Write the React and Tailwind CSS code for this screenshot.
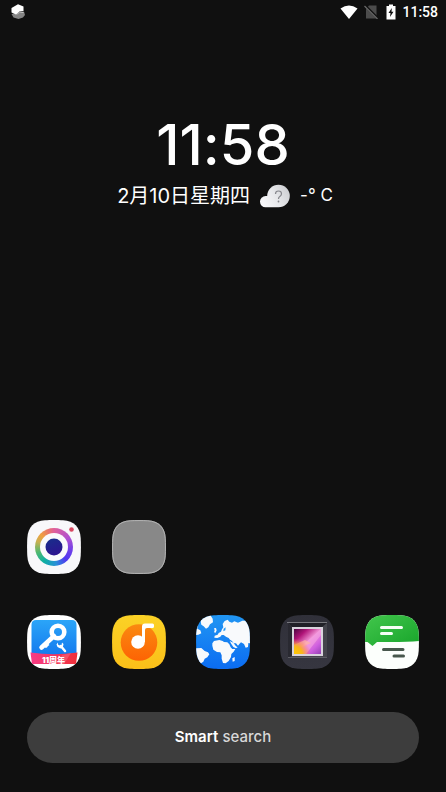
import React from 'react';

const SQUIRCLE = 'M18 0.3C23 0 31 0 36 0.3C47 1 53 7 53.7 18C54 23 54 31 53.7 36C53 47 47 53 36 53.7C31 54 23 54 18 53.7C7 53 1 47 0.3 36C0 31 0 23 0.3 18C1 7 7 1 18 0.3Z';

const AppIcon = ({ id, fill, children }) => (
    <svg viewBox="0 0 54 54" className="size-[54px]" aria-hidden="true">
        <defs>
            <clipPath id={`${id}-clip`}>
                <path d={SQUIRCLE} />
            </clipPath>
        </defs>
        <g clipPath={`url(#${id}-clip)`}>
            <rect width="54" height="54" fill={fill} />
            {children}
        </g>
    </svg>
);

const CameraIcon = () => (
    <AppIcon id="camera" fill="#f8f8fa">
        <foreignObject x="8" y="8" width="38" height="38">
            <div className="size-[38px] rounded-full bg-[conic-gradient(#e0609a,#b050d0_16%,#7040e8_28%,#5038f0_38%,#2890d8_48%,#10b0a0_60%,#50b870_70%,#c8b050_80%,#f0a040_87%,#e87868_94%,#e0609a)]" />
        </foreignObject>
        <circle cx="27" cy="27" r="14" fill="#fafafc" />
        <circle cx="27" cy="27" r="8.5" fill="url(#lens)" />
        <circle cx="44.5" cy="9.5" r="2.3" fill="#d84860" />
        <defs>
            <linearGradient id="lens" x1="0" y1="0" x2="0.4" y2="1">
                <stop stopColor="#17308a" />
                <stop offset="1" stopColor="#2c1590" />
            </linearGradient>
        </defs>
    </AppIcon>
);

const FolderIcon = () => (
    <svg viewBox="0 0 54 54" className="size-[54px]" aria-hidden="true">
        <path d={SQUIRCLE} fill="#888888" />
        <path d={SQUIRCLE} fill="none" stroke="#b4b4b4" strokeWidth="1" transform="translate(.5 .5) scale(.982)" />
    </svg>
);

const KeyIcon = () => (
    <AppIcon id="key" fill="#ffffff">
        <defs>
            <linearGradient id="key-blue" x1="0" y1="0" x2="0" y2="1">
                <stop stopColor="#2ba5f8" />
                <stop offset="1" stopColor="#1479ee" />
            </linearGradient>
            <linearGradient id="key-red">
                <stop stopColor="#f83c88" />
                <stop offset="1" stopColor="#f03038" />
            </linearGradient>
        </defs>
        <path d="M9 5H45Q49.500 5 49.500 10V41H4.500V10Q4.500 5 9 5Z" fill="url(#key-blue)" />
        <circle cx="31" cy="17" r="6.300" fill="none" stroke="#fff" strokeWidth="4.600" />
        <path d="M27 21L14.500 32.500" stroke="#fff" strokeWidth="4.500" strokeLinecap="round" fill="none" />
        <path d="M17 30L20 27.500L22.500 30L21 31L20 32.500L18.500 33Z" fill="#fff" />
        <path d="M33.800 31L38 36" stroke="#fff" strokeWidth="2.500" strokeLinecap="round" />
        <path d="M31 27.500L29.500 29.500L30.500 32L33.500 33.500L36 31.800L36.500 29L35 27.500L34.500 30L32.500 30.500L31 29.500Z" fill="#fff" />
        <path d="M3.500 37.500Q27 41 50.500 37.500L49 49H5Z" fill="url(#key-red)" />
        <path d="M35 40L44 38L37 49H31Z" fill="#fa6a80" opacity=".55" />
        <text x="26.500" y="47.500" textAnchor="middle" fill="#fff" fontFamily="Inter, 'Noto Sans CJK SC', sans-serif" fontSize="8" fontWeight="900">11周年</text>
    </AppIcon>
);

const MusicIcon = () => (
    <AppIcon id="music" fill="url(#music-bg)">
        <defs>
            <linearGradient id="music-bg" x1="0" y1="0" x2="0" y2="1">
                <stop stopColor="#fbd226" />
                <stop offset="1" stopColor="#fbc019" />
            </linearGradient>
            <linearGradient id="music-disc" x1="0" y1="0" x2="0" y2="1">
                <stop stopColor="#fa8a10" />
                <stop offset="1" stopColor="#fd6304" />
            </linearGradient>
        </defs>
        <circle cx="27" cy="27.500" r="18.300" fill="url(#music-disc)" />
        <circle cx="26" cy="27" r="6.800" fill="#fff" />
        <path d="M30 27V11.500Q30 8.500 33 8.500H40.500Q42 8.500 42 10V11.500Q42 13 40.500 13H35Q33 13 33 15V27Z" fill="#fff" />
    </AppIcon>
);

const GlobeIcon = () => (
    <AppIcon id="globe" fill="url(#sea)">
        <defs>
            <linearGradient id="sea" x1="0" y1="0" x2="0" y2="1">
                <stop stopColor="#2196f3" />
                <stop offset="1" stopColor="#0b6cf2" />
            </linearGradient>
        </defs>
        <g transform="translate(-8 -7) scale(.33333)" fill="#f8fafc">
            <path d="M42 26L66 20L74 32L75 43L66 49L61 58L54 62L47 55L40 50L38 40Z" />
            <path d="M20 56L30 52L28 62L37 67L40 76L31 80L20 82Z" />
            <path d="M20 121L40 120L50 129L60 133L64 139L58 148L50 152L46 161L39 166L35 175L20 170Z" />
            <path d="M78 61L84 60L86 67L83 74L78 73L80 67Z" />
            <path d="M104 48L110 39L119 35L124 41L132 44L139 40L150 44L163 38L175 38L190 46V107L181 105L180 117L173 119L168 108L159 103L154 108L150 113L144 106L137 106L132 99L126 95L122 90L114 86L107 81L101 81L97 86L88 90L79 89L80 83L89 80L92 75L99 71L102 64L106 58Z" />
            <path d="M78 99L94 96L104 99L108 102L118 103L124 109L128 118L133 123L142 123L137 131L130 138L129 147L122 159L113 166L105 165L101 152L101 142L97 133L87 132L76 125L73 113L73 106Z" />
            <path d="M125 99L136 104L144 115L149 118L144 121L136 117L130 108Z" />
            <path d="M133 151L140 147V159L134 161Z" />
            <path d="M107 62L113 58L112 67L106 70Z" fill="#2196f3" />
        </g>
    </AppIcon>
);

const GalleryIcon = () => (
    <AppIcon id="gallery" fill="url(#gallery-bg)">
        <defs>
            <linearGradient id="gallery-bg" x1="0" y1="0" x2="0" y2="1">
                <stop stopColor="#303039" />
                <stop offset="1" stopColor="#363640" />
            </linearGradient>
            <linearGradient id="gallery-photo" x1="0" y1="0" x2="1" y2="1">
                <stop stopColor="#4a0540" />
                <stop offset=".25" stopColor="#b01478" />
                <stop offset=".5" stopColor="#f090d4" />
                <stop offset=".75" stopColor="#d060e0" />
                <stop offset="1" stopColor="#9440b4" />
            </linearGradient>
            <radialGradient id="gallery-glow" cx="0" cy="1" r=".62">
                <stop stopColor="#ffca00" />
                <stop offset=".5" stopColor="#f8b51c" />
                <stop offset="1" stopColor="#ff6c60" stopOpacity="0" />
            </radialGradient>
        </defs>
        <rect x="8" y="8" width="39" height="35" fill="#44444c" />
        <path d="M8 8H47L42 12H12Z" fill="#202027" />
        <path d="M8 8V43L12 41V12Z" fill="#292931" />
        <path d="M7 7.500H47" stroke="#77777d" />
        <path d="M8 42.500H47" stroke="#5d5d65" />
        <rect x="12" y="12" width="31" height="29" fill="#d8d3dc" />
        <rect x="14" y="14" width="27" height="25" fill="url(#gallery-photo)" />
        <path d="M22 31L41 14V20L26 39H19Z" fill="#f4a1e4" opacity=".65" />
        <path d="M14 30L25 25L31 28L20 33L14 37Z" fill="#ffb3a3" opacity=".7" />
        <rect x="14" y="14" width="27" height="25" fill="url(#gallery-glow)" />
    </AppIcon>
);

const MessageIcon = () => (
    <AppIcon id="message" fill="#fcfffc">
        <defs>
            <linearGradient id="message-green" x1="0" y1="0" x2="1" y2="1">
                <stop stopColor="#42c64c" />
                <stop offset="1" stopColor="#18a52b" />
            </linearGradient>
        </defs>
        <path d="M0 0H54V26Q43 27 26 27H12L7.500 31L2.500 27H0Z" fill="url(#message-green)" />
        <path d="M16.500 12.500H36.500M16.500 18.500H26.500" stroke="#f5fff5" strokeWidth="3" strokeLinecap="round" />
        <path d="M18.500 34.500H38M29 41H38.500" stroke="#48584d" strokeWidth="3" strokeLinecap="round" />
    </AppIcon>
);

const apps = [
    { name: 'Camera', icon: CameraIcon },
    { name: 'Folder', icon: FolderIcon },
];

const dock = [
    { name: 'Keys', icon: KeyIcon },
    { name: 'Music', icon: MusicIcon },
    { name: 'Browser', icon: GlobeIcon },
    { name: 'Gallery', icon: GalleryIcon },
    { name: 'Messages', icon: MessageIcon },
];

const AppRow = ({ items }) => (
    <div className="grid grid-cols-5 justify-items-center px-3">
        {items.map(({ name, icon: Icon }) => (
            <button key={name} aria-label={name}>
                <Icon />
            </button>
        ))}
    </div>
);

const StatusBar = () => (
    <header className="flex h-6 items-center justify-between pl-2.5 pr-2">
        <svg viewBox="0 0 16 18" className="h-[18px] w-4" aria-hidden="true">
            <path d="M1.500 11L6 10L14 8.500L15 12L13 14.500L8.500 16L3.500 14.500Z" fill="#858585" />
            <path d="M1.500 5L8 1.200L13.500 3.500V8L9.500 8.500L6 11.500L1.500 9.500Z" fill="#fff" />
            <path d="M7 11.500L9.500 9L13.500 9.500" stroke="#c8c8c8" fill="none" />
        </svg>
        <div className="flex items-center gap-1.5 text-white">
            <svg viewBox="0 0 18 14" className="h-3.5 w-[18px]" aria-hidden="true">
                <path d="M9 14L0.500 3.500Q9-2.500 17.500 3.500Z" fill="#fff" />
            </svg>
            <svg viewBox="0 0 14 14" className="size-3.5" aria-hidden="true">
                <path d="M5 .5H12.500V13.500H2V4Z" fill="#4c4c4c" />
                <path d="M1 0.500L14 13.500" stroke="#101010" strokeWidth="2.500" />
                <path d="M.5 1L13.500 14" stroke="#696969" strokeWidth="1.200" />
            </svg>
            <svg viewBox="0 0 10 16" className="ml-0.5 h-4 w-2.5" aria-hidden="true">
                <path d="M3 0.500H7V2H9.500V15.500H.5V2H3Z" fill="#fff" />
                <path d="M5.800 4L2.500 9H4.500L4 13L7.500 7.800H5.500Z" fill="#101010" />
            </svg>
            <time className="font-[Roboto,sans-serif] text-sm font-medium leading-6">11:58</time>
        </div>
    </header>
);

const CloudIcon = () => (
    <svg viewBox="0 0 30 24" className="h-6 w-[30px]" aria-hidden="true">
        <defs>
            <linearGradient id="cloud" gradientUnits="userSpaceOnUse" x1="4" y1="20" x2="29" y2="6">
                <stop stopColor="#f8f8fa" />
                <stop offset=".5" stopColor="#e6e7ea" />
                <stop offset="1" stopColor="#cdced2" />
            </linearGradient>
        </defs>
        <g fill="url(#cloud)">
            <circle cx="18.500" cy="12" r="11.300" />
            <rect x="0" y="12" width="22" height="11.300" rx="5.600" />
        </g>
        <path d="M15.500 10Q15.500 7 18.500 7Q21.500 7 21.500 9.800Q21.500 11.500 19.800 12.500Q18.500 13.300 18.500 15" fill="none" stroke="#85868c" strokeWidth="1.200" />
        <circle cx="18.500" cy="17.500" r=".9" fill="#85868c" />
    </svg>
);

const App = () => (
    <main className="flex min-h-screen flex-col bg-[#101010] font-[Inter,'Noto_Sans_CJK_SC',sans-serif] text-white">
        <StatusBar />

        <section className="mt-[88px] flex flex-col items-center gap-0.5">
            <time className="text-[56px] font-medium leading-[66px] [font-feature-settings:'calt'_0]">11:58</time>
            <div className="flex h-8 items-center gap-2.5 pl-1 text-xl">
                <span>2月10日星期四</span>
                <CloudIcon />
                <span className="text-[17px]">-° C</span>
            </div>
        </section>

        <div className="mt-auto flex flex-col gap-[41px]">
            <AppRow items={apps} />
            <AppRow items={dock} />
        </div>

        <div className="px-[27px] pb-[29px] pt-[43px]">
            <button className="h-[51px] w-full rounded-full bg-[#3d3d3d] text-[15px]">
                <span className="font-semibold">Smart</span> <span className="font-medium text-[#d8d8d8]">search</span>
            </button>
        </div>
    </main>
);

export default App;
